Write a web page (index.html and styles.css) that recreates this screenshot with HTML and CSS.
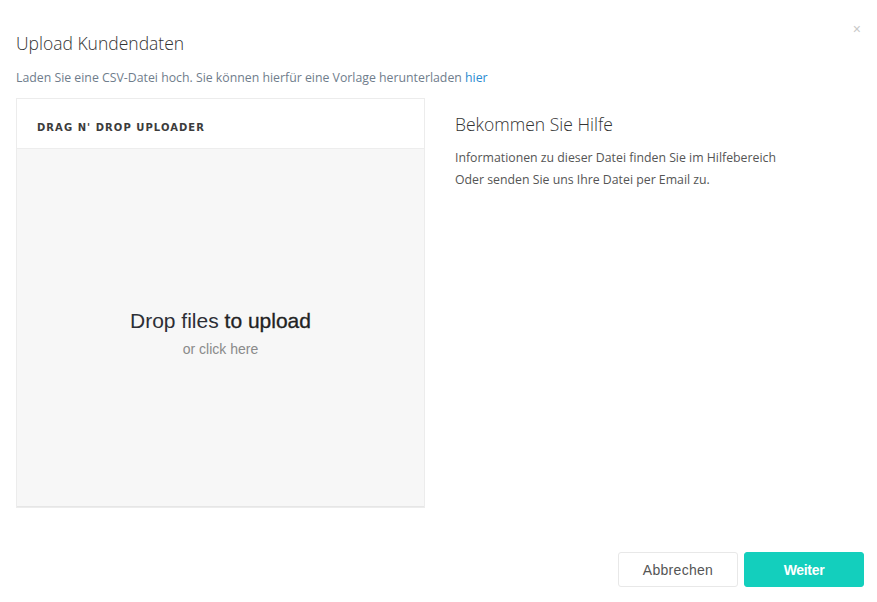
FILE: index.html
```html
<!DOCTYPE html>
<html lang="de">
<head>
<meta charset="utf-8">
<title>Upload Kundendaten</title>
<link rel="stylesheet" href="styles.css">
</head>
<body>
<div class="modal">
  <button class="close" aria-label="Schließen">×</button>
  <h1 class="title">Upload Kundendaten</h1>
  <p class="subtitle">Laden Sie eine CSV-Datei hoch. Sie können hierfür eine Vorlage herunterladen <a href="#" class="link">hier</a></p>
  <div class="content">
    <div class="card">
      <div class="card-header">DRAG N' DROP UPLOADER</div>
      <div class="dropzone">
        <div class="drop-main">Drop files <strong>to upload</strong></div>
        <div class="drop-sub">or click here</div>
      </div>
    </div>
    <div class="help">
      <h2 class="help-title">Bekommen Sie Hilfe</h2>
      <p class="help-text">Informationen zu dieser Datei finden Sie im Hilfebereich<br>Oder senden Sie uns Ihre Datei per Email zu.</p>
    </div>
  </div>
  <div class="footer">
    <button class="btn btn-default">Abbrechen</button>
    <button class="btn btn-primary">Weiter</button>
  </div>
</div>
</body>
</html>
```

FILE: styles.css
```css
html, body {
  margin: 0;
  padding: 0;
  background: #fff;
}
body {
  font-family: "Open Sans", "Noto Sans", sans-serif;
  width: 877px;
  height: 602px;
  overflow: hidden;
}
.modal {
  position: relative;
  padding: 31px 13px 0 16px;
}
.close {
  position: absolute;
  top: 21px;
  right: 16px;
  border: 0;
  background: none;
  padding: 0;
  font-family: "Liberation Sans", sans-serif;
  font-size: 14px;
  line-height: 16px;
  color: #c8c8c8;
}
.title {
  margin: 0;
  font-weight: 300;
  font-size: 17.5px;
  line-height: 24px;
  color: #333;
}
.subtitle {
  margin: 13px 0 0;
  font-size: 12.3px;
  line-height: 20px;
  color: #6f7d8c;
}
.link {
  color: #2a8bd0;
  text-decoration: none;
}
.content {
  display: flex;
  margin-top: 10px;
  gap: 30px;
}
.card {
  width: 407px;
  height: 408px;
  border: 1px solid #ececec;
  display: flex;
  flex-direction: column;
}
.card-header {
  height: 49px;
  box-sizing: border-box;
  padding: 22px 0 0 20px;
  font-family: "DejaVu Sans", sans-serif;
  font-weight: bold;
  font-size: 10px;
  letter-spacing: 1.05px;
  color: #3c3c3c;
  line-height: 14px;
}
.dropzone {
  flex: 1;
  background: #f7f7f7;
  border-top: 1px solid #ededed;
  border-bottom: 1px solid #e6e6e6;
  display: flex;
  flex-direction: column;
  align-items: center;
  justify-content: center;
  font-family: "Liberation Sans", sans-serif;
  padding-top: 12px;
}
.drop-main {
  font-size: 21px;
  line-height: 24px;
  color: #2d2f36;
}
.drop-main strong {
  font-weight: 500;
  color: #222;
  -webkit-text-stroke: 0.3px #222;
}
.drop-sub {
  font-size: 14px;
  line-height: 18px;
  margin-top: 7px;
  color: #8a8a8a;
}
.help {
  padding-top: 14px;
}
.help-title {
  margin: 0;
  font-weight: 300;
  font-size: 17.5px;
  line-height: 24px;
  color: #333;
}
.help-text {
  margin: 11px 0 0;
  font-size: 12.3px;
  line-height: 22px;
  color: #555;
}
.footer {
  display: flex;
  justify-content: flex-end;
  gap: 6px;
  margin-top: 44px;
}
.btn {
  width: 120px;
  height: 35px;
  border-radius: 3px;
  font-family: "Liberation Sans", sans-serif;
  font-size: 14px;
  cursor: pointer;
}
.btn-default {
  background: #fff;
  border: 1px solid #e8e8e8;
  color: #555;
  letter-spacing: 0.3px;
}
.btn-primary {
  background: #13cfbd;
  border: 1px solid #13cfbd;
  color: #fff;
  font-weight: bold;
  letter-spacing: -0.3px;
}
```
